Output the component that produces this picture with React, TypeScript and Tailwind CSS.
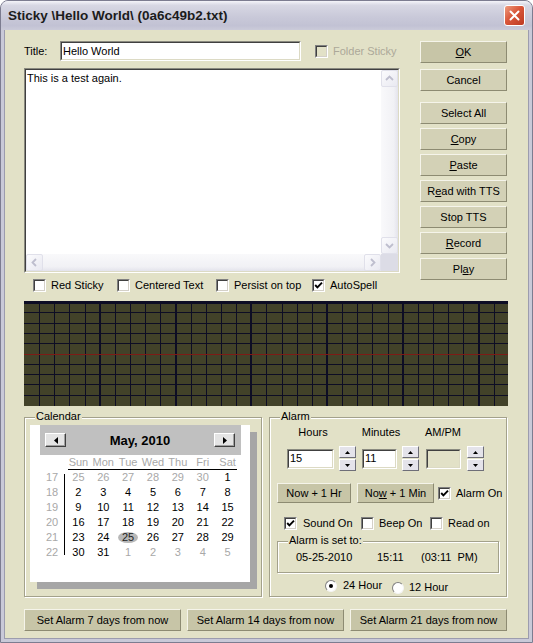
import type { ReactNode } from 'react'

const raised = 'border border-t-[#f5f4ea] border-l-[#f5f4ea] border-r-[#8d8b72] border-b-[#8d8b72]'

function Btn({ children, className = '', dark = false }: { children: ReactNode; className?: string; dark?: boolean }) {
  return (
    <button
      type="button"
      className={`flex shrink-0 items-center justify-center ${raised} ${dark ? 'bg-[#c7c5a7]' : 'bg-[#d3d1b6]'} ${className}`}
    >
      {children}
    </button>
  )
}

function Sunken({ children, className = '', inner = '' }: { children?: ReactNode; className?: string; inner?: string }) {
  return (
    <div className={`shrink-0 border border-t-[#8a8a80] border-l-[#8a8a80] border-r-white border-b-white ${className}`}>
      <div className={`h-full border border-t-[#404040] border-l-[#404040] border-r-[#dcdac4] border-b-[#dcdac4] ${inner}`}>
        {children}
      </div>
    </div>
  )
}

function Check({ on = false, off = false }: { on?: boolean; off?: boolean }) {
  return (
    <span className="block shrink-0 w-[13px] h-[13px] border border-t-[#808080] border-l-[#808080] border-r-white border-b-white">
      <span
        className={`flex items-center justify-center w-full h-full border border-t-[#404040] border-l-[#404040] border-r-[#d4d0c8] border-b-[#d4d0c8] ${off ? 'bg-[#e2e1c7]' : 'bg-white'}`}
      >
        {on && (
          <svg width="9" height="9" viewBox="0 0 9 9">
            <path d="M1.2 4 L3.4 6.4 L8 1.6" fill="none" stroke="#000" strokeWidth="1.9" />
          </svg>
        )}
      </span>
    </span>
  )
}

function CheckItem({ label, on = false, className = '' }: { label: ReactNode; on?: boolean; className?: string }) {
  return (
    <div className={`flex shrink-0 items-center gap-[5px] ${className}`}>
      <Check on={on} />
      <span className="whitespace-nowrap">{label}</span>
    </div>
  )
}

function Radio({ on = false }: { on?: boolean }) {
  return (
    <span className="flex shrink-0 items-center justify-center w-[12px] h-[12px] rounded-full border border-t-[#808080] border-l-[#808080] border-r-[#f4f4f4] border-b-[#f4f4f4] bg-white">
      {on && <span className="w-[4px] h-[4px] rounded-full bg-black" />}
    </span>
  )
}

function SbBtn({ dir }: { dir: 'up' | 'down' | 'left' | 'right' }) {
  const d = {
    up: 'M4 9 L7.5 5.5 L11 9',
    down: 'M4 6 L7.5 9.5 L11 6',
    left: 'M9 4 L5.5 7.5 L9 11',
    right: 'M6 4 L9.5 7.5 L6 11',
  }[dir]
  return (
    <div className="w-[17px] h-[17px] shrink-0 rounded-[2px] border border-[#e0e0ea] bg-[linear-gradient(135deg,#fbfbfd,#e9e9f1)]">
      <svg width="15" height="15" viewBox="0 0 15 15">
        <path d={d} fill="none" stroke="#bebece" strokeWidth="1.8" />
      </svg>
    </div>
  )
}

function SpinBtn({ up = false }: { up?: boolean }) {
  return (
    <div className="flex items-center justify-center w-[17px] h-[12px] bg-[#e4e3ea] border border-t-white border-l-white border-r-[#6e6e78] border-b-[#6e6e78]">
      <svg width="5" height="3" viewBox="0 0 5 3">
        <path d={up ? 'M0 3 L2.5 0 L5 3 Z' : 'M0 0 L2.5 3 L5 0 Z'} fill="#000" />
      </svg>
    </div>
  )
}

function Spin({ className = '' }: { className?: string }) {
  return (
    <div className={`flex shrink-0 flex-col gap-[1px] ${className}`}>
      <SpinBtn up />
      <SpinBtn />
    </div>
  )
}

function Group({ label, className = '', children }: { label: string; className?: string; children?: ReactNode }) {
  return (
    <div className={`relative shrink-0 border border-[#a3a18b] shadow-[inset_1px_1px_0_#ffffff,1px_1px_0_#ffffff] ${className}`}>
      <span className="absolute -top-[8px] left-[10px] px-[1px] bg-[#e2e1c7] whitespace-nowrap">{label}</span>
      {children}
    </div>
  )
}

function Scope() {
  const W = 484
  const H = 105
  const cols = Array.from({ length: 31 }, (_, i) => i + 1)
  const rows = Array.from({ length: 9 }, (_, i) => i + 1)
  return (
    <svg width={W} height={H} className="block mt-[9px]">
      <rect width={W} height={H} fill="#424229" />
      {cols.map((i) => {
        const thick = i % 5 === 0
        return (
          <rect key={i} x={Math.round(i * 15.15) - (thick ? 1 : 0)} y={0} width={thick ? 2 : 1} height={H} fill="#0d0d24" />
        )
      })}
      {rows.map((j) => (
        <rect key={j} x={0} y={Math.round(1 + j * 10.3)} width={W} height={1} fill={j === 5 ? '#7e1b16' : '#0d0d24'} />
      ))}
      <rect width={W} height={3} fill="#0d0d24" />
    </svg>
  )
}

function NavBtn({ left = false }: { left?: boolean }) {
  return (
    <div className="flex items-center justify-center w-[21px] h-[14px] bg-[#e4e4e4] border border-t-white border-l-white border-r-[#404040] border-b-[#404040] shadow-[inset_-1px_-1px_0_#a0a0a0]">
      <svg width="4" height="7" viewBox="0 0 4 7">
        <path d={left ? 'M4 0 L0 3.5 L4 7 Z' : 'M0 0 L4 3.5 L0 7 Z'} fill="#000" />
      </svg>
    </div>
  )
}

const cal: { wk: number; d: number[] }[] = [
  { wk: 17, d: [25, 26, 27, 28, 29, 30, 1] },
  { wk: 18, d: [2, 3, 4, 5, 6, 7, 8] },
  { wk: 19, d: [9, 10, 11, 12, 13, 14, 15] },
  { wk: 20, d: [16, 17, 18, 19, 20, 21, 22] },
  { wk: 21, d: [23, 24, 25, 26, 27, 28, 29] },
  { wk: 22, d: [30, 31, 1, 2, 3, 4, 5] },
]

function Calendar() {
  return (
    <div className="ml-[5px] mt-[7px] w-[220px] h-[157px] bg-white shadow-[7px_7px_0_#a6a6a6]">
      <div className="ml-[10px] mt-[4px] w-[201px] h-[30px] flex items-center justify-between px-[5px] pr-[6px] bg-[#c0c0c0]">
        <NavBtn left />
        <span className="text-[13px] font-bold">May, 2010</span>
        <NavBtn />
      </div>
      <div className="ml-[36px] mt-[1px] w-[174px] h-[13px] grid grid-cols-7 text-center text-[#a8a8a8]">
        {['Sun', 'Mon', 'Tue', 'Wed', 'Thu', 'Fri', 'Sat'].map((n) => (
          <span key={n}>{n}</span>
        ))}
      </div>
      <div className="ml-[38px] w-[169px] h-px bg-black" />
      <div className="flex">
        <div className="ml-[10px] w-[24px] flex flex-col text-center text-[#a8a8a8]">
          {cal.map((r) => (
            <span key={r.wk} className="h-[15px] leading-[15px]">{r.wk}</span>
          ))}
        </div>
        <div className="w-px mt-[4px] mb-[5px] bg-black" />
        <div className="ml-px w-[174px] flex flex-col">
          {cal.map((r, ri) => (
            <div key={r.wk} className="h-[15px] grid grid-cols-7 items-center text-center">
              {r.d.map((n) => {
                const grey = (ri === 0 && n > 7) || (ri === 5 && n < 7)
                if (ri === 4 && n === 25)
                  return (
                    <span key={n} className="flex justify-center">
                      <span className="px-[4px] leading-[11px] rounded-[50%] bg-[#b8b8b8] text-[#222]">25</span>
                    </span>
                  )
                return (
                  <span key={n} className={grey ? 'text-[#a8a8a8]' : ''}>
                    {n}
                  </span>
                )
              })}
            </div>
          ))}
        </div>
      </div>
    </div>
  )
}

function Alarm() {
  return (
    <Group label="Alarm" className="w-[238px] h-[180px]">
      <div className="flex mt-[8px] h-[13px]">
        <span className="ml-[20px] w-[46px] text-center">Hours</span>
        <span className="ml-[25px] w-[40px] text-center">Minutes</span>
        <span className="ml-[22px] w-[40px] text-center">AM/PM</span>
      </div>
      <div className="flex items-center mt-[7px] h-[25px]">
        <Sunken className="ml-[17px] w-[47px] h-[20px] bg-white" inner="flex items-center pl-[1px]">15</Sunken>
        <Spin className="ml-[5px]" />
        <Sunken className="ml-[6px] w-[35px] h-[20px] bg-white" inner="flex items-center pl-[1px]">11</Sunken>
        <Spin className="ml-[5px]" />
        <Sunken className="ml-[7px] w-[35px] h-[20px] bg-[#e2e1c7]" />
        <Spin className="ml-[6px]" />
      </div>
      <div className="flex items-center mt-[12px] h-[20px]">
        <Btn dark className="ml-[7px] w-[74px] h-[20px]">Now + 1 Hr</Btn>
        <Btn dark className="ml-[6px] w-[77px] h-[20px]">
          No<span className="underline">w</span>&nbsp;+ 1 Min
        </Btn>
        <CheckItem on label="Alarm On" className="ml-[4px] gap-[4px]" />
      </div>
      <div className="flex items-center mt-[14px] h-[13px]">
        <CheckItem on label="Sound On" className="ml-[14px] w-[77px] gap-[6px]" />
        <CheckItem label="Beep On" className="w-[69px]" />
        <CheckItem label="Read on" />
      </div>
      <Group label="Alarm is set to:" className="ml-[7px] mt-[11px] w-[222px] h-[32px]">
        <div className="flex pl-[18px] pt-[9px] whitespace-pre">
          <span className="w-[81px]">05-25-2010</span>
          <span className="w-[44px]">15:11</span>
          <span>(03:11  PM)</span>
        </div>
      </Group>
      <div className="flex items-start mt-[6px]">
        <div className="ml-[55px] w-[67px] flex items-center gap-[6px]">
          <Radio on />
          <span>24 Hour</span>
        </div>
        <div className="mt-[2px] flex items-center gap-[5px]">
          <Radio />
          <span>12 Hour</span>
        </div>
      </div>
    </Group>
  )
}

export default function App() {
  return (
    <div className="w-[533px] h-[643px] font-['Liberation_Sans',Arial,sans-serif] text-[11px] leading-[13px] text-black">
      <div className="flex flex-col h-full overflow-hidden rounded-t-[8px] border border-[#7c7c90] bg-[#c9c9d8]">
        {/* caption */}
        <div className="h-[29px] shrink-0 flex items-center justify-between pl-[7px] pr-[7px] bg-[linear-gradient(to_bottom,#f4f4f9,#d7d7e3_15%,#c9c9d9_55%,#c2c2d4_85%,#cbcbd9)]">
          <span className="text-[13.5px] leading-[16px] font-bold text-[#1c1c1c]">{'Sticky \\Hello World\\ (0a6c49b2.txt)'}</span>
          <div className="flex items-center justify-center w-[21px] h-[21px] rounded-[3px] border border-white bg-[linear-gradient(135deg,#ee9c7e,#d9563a_45%,#bd3a22)]">
            <svg width="11" height="11" viewBox="0 0 11 11">
              <path d="M1.5 1.5 L9.5 9.5 M9.5 1.5 L1.5 9.5" stroke="#fff" strokeWidth="2" strokeLinecap="round" />
            </svg>
          </div>
        </div>

        <div className="flex-1 mx-[3px] mb-[3px] border border-t-0 border-[#9c9cae] bg-[#e2e1c7] pl-[19px] pt-[11px]">
          <div className="flex">
            <div className="w-[376px]">
              <div className="flex items-center h-[20px]">
                <span className="w-[36px]">Title:</span>
                <Sunken className="w-[241px] h-[20px] bg-white" inner="flex items-center pl-[1px]">
                  Hello World
                </Sunken>
                <div className="ml-[14px] flex items-center gap-[5px] text-[#aca899]">
                  <Check off />
                  <span>Folder Sticky</span>
                </div>
              </div>

              <Sunken className="mt-[7px] h-[205px] bg-white" inner="flex flex-col">
                <div className="flex flex-1 min-h-0">
                  <div className="flex-1 pl-[1px] pt-[2px]">This is a test again.</div>
                  <div className="w-[17px] flex flex-col bg-[linear-gradient(to_right,#f9f9fb,#f1f1f5_75%,#e3e3ec)]">
                    <SbBtn dir="up" />
                    <div className="flex-1" />
                    <SbBtn dir="down" />
                  </div>
                </div>
                <div className="flex h-[17px]">
                  <div className="flex-1 flex bg-[linear-gradient(to_bottom,#f9f9fb,#f1f1f5_75%,#e3e3ec)]">
                    <SbBtn dir="left" />
                    <div className="flex-1" />
                    <SbBtn dir="right" />
                  </div>
                  <div className="w-[17px] bg-[#dcdce6]" />
                </div>
              </Sunken>

              <div className="mt-[6px] flex items-center h-[13px] pl-[9px]">
                <CheckItem label="Red Sticky" className="w-[84px]" />
                <CheckItem label="Centered Text" className="w-[99px]" />
                <CheckItem label="Persist on top" className="w-[96px]" />
                <CheckItem on label="AutoSpell" />
              </div>
            </div>

            <div className="ml-[20px] w-[87px] flex flex-col">
              <Btn dark className="h-[22px]">
                <span className="underline">O</span>K
              </Btn>
              <Btn className="mt-[6px] h-[22px]">Cancel</Btn>
              <Btn className="mt-[11px] h-[22px]">Select All</Btn>
              <Btn className="mt-[4px] h-[22px]">
                <span className="underline">C</span>opy
              </Btn>
              <Btn className="mt-[4px] h-[22px]">
                <span className="underline">P</span>aste
              </Btn>
              <Btn className="mt-[4px] h-[22px]">
                R<span className="underline">e</span>ad with TTS
              </Btn>
              <Btn className="mt-[4px] h-[22px]">Stop TTS</Btn>
              <Btn className="mt-[4px] h-[22px]">
                <span className="underline">R</span>ecord
              </Btn>
              <Btn className="mt-[4px] h-[22px]">
                Pl<span className="underline">a</span>y
              </Btn>
            </div>
          </div>

          <Scope />

          <div className="flex gap-[7px] mt-[11px]">
            <Group label="Calendar" className="w-[238px] h-[180px]">
              <Calendar />
            </Group>
            <Alarm />
          </div>

          <div className="flex gap-[6px] mt-[12px]">
            <Btn dark className="w-[157px] h-[22px]">Set Alarm 7 days from now</Btn>
            <Btn dark className="w-[157px] h-[22px]">Set Alarm 14 days from now</Btn>
            <Btn dark className="w-[157px] h-[22px]">Set Alarm 21 days from now</Btn>
          </div>
        </div>
      </div>
    </div>
  )
}
